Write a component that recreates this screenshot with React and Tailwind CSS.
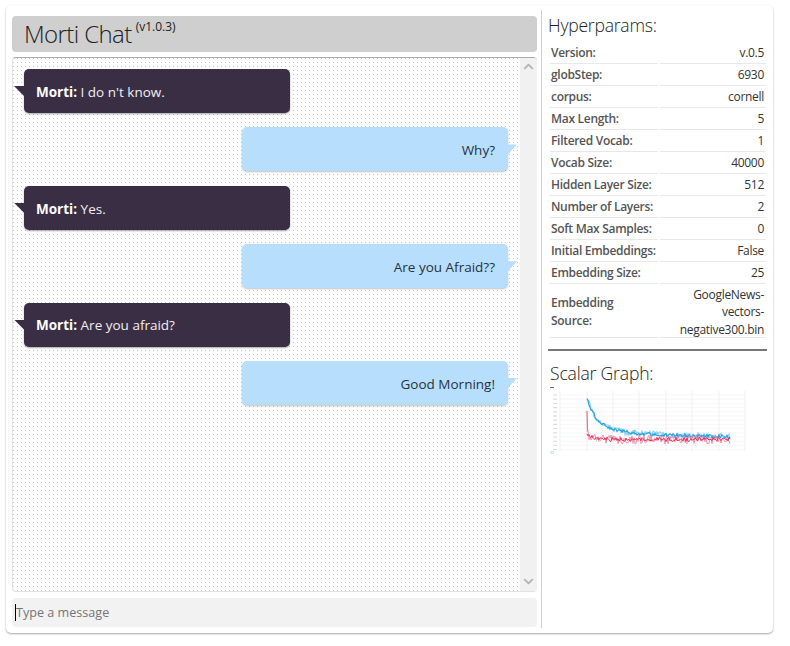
import { ChevronUp, ChevronDown } from "lucide-react";

const messages = [
  { from: "bot", text: "I do n't know." },
  { from: "me", text: "Why?" },
  { from: "bot", text: "Yes." },
  { from: "me", text: "Are you Afraid??" },
  { from: "bot", text: "Are you afraid?" },
  { from: "me", text: "Good Morning!" },
];

const params = [
  ["Version:", "v.0.5"],
  ["globStep:", "6930"],
  ["corpus:", "cornell"],
  ["Max Length:", "5"],
  ["Filtered Vocab:", "1"],
  ["Vocab Size:", "40000"],
  ["Hidden Layer Size:", "512"],
  ["Number of Layers:", "2"],
  ["Soft Max Samples:", "0"],
  ["Initial Embeddings:", "False"],
  ["Embedding Size:", "25"],
];

// noisy training curves for the little scalar chart
function noise(i, seed) {
  const v = Math.sin(i * 12.9898 + seed) * 43758.5453;
  return (v - Math.floor(v)) * 2 - 1;
}

function curve(seed, fn, amp) {
  const pts = [];
  for (let x = 0; x <= 143; x += 1) {
    const y = fn(x) + noise(x * 2, seed) * amp;
    pts.push(`${(587 + x).toFixed(1)},${y.toFixed(1)}`);
  }
  return pts.join(" ");
}

const blueFn = (x) => 438 - 39 * (0.75 * Math.exp(-x / 10) + 0.25 * Math.exp(-x / 50));
const redFn = (x) => 440.5 - 5 * Math.exp(-x / 8);

function ScalarChart() {
  const vLines = [560, 587, 613, 639, 666, 692, 719, 745];
  const hLines = Array.from({ length: 14 }, (_, i) => 396 + i * 4.2);
  return (
    <svg width="200" height="70" viewBox="548 386 200 70" className="blur-[0.6px]">
      <rect x="550" y="388" width="4" height="1" fill="#666" />
      {vLines.map((x) => (
        <line key={x} x1={x} x2={x} y1="392" y2="452" stroke="#e6eaed" strokeWidth="0.7" />
      ))}
      {hLines.map((y) => (
        <g key={y}>
          <line x1="560" x2="745" y1={y} y2={y} stroke="#eef0f2" strokeWidth="0.6" />
          <rect x="553" y={y - 0.5} width="4" height="1" fill="#d5d8da" />
        </g>
      ))}
      <polyline points={curve(3.1, blueFn, 3)} fill="none" stroke="#8fd0f2" strokeWidth="1.2" />
      <polyline points={curve(7.7, blueFn, 1.8)} fill="none" stroke="#1f9fdf" strokeWidth="1.1" />
      <polyline points="587,412 587.5,432" fill="none" stroke="#ee6a88" strokeWidth="1.2" />
      <polyline points={curve(5.3, redFn, 4.5)} fill="none" stroke="#f08aa3" strokeWidth="0.9" />
      <polyline points={curve(9.2, redFn, 2.2)} fill="none" stroke="#e8355f" strokeWidth="1" />
      <rect x="551" y="452.5" width="2.5" height="2" fill="none" stroke="#9cc8e6" strokeWidth="0.5" />
    </svg>
  );
}

function Bubble({ from, text }) {
  if (from === "bot") {
    return (
      <div className="relative flex h-11 w-[266px] items-center rounded-[5px] bg-[#3a2e44] pl-3 pt-[2px] text-[13.5px] text-[#f0eef2] shadow-[0_1px_2px_rgba(0,0,0,0.35)]">
        <span className="absolute left-[-10px] top-[17px] h-[10px] w-[10px] bg-[#3a2e44] [clip-path:polygon(0_0,100%_0,100%_100%)]" />
        <p>
          <b className="font-bold text-white">Morti:</b> {text}
        </p>
      </div>
    );
  }
  return (
    <div className="relative ml-[218px] flex h-11 w-[266px] items-center justify-end rounded-[5px] bg-[#b7dffd] pr-[13px] pt-[2px] text-[13.5px] text-[#27313d] shadow-[0_1px_2px_rgba(0,0,0,0.25)]">
      <span className="absolute right-[-9px] top-[17px] h-[10px] w-[9px] bg-[#b7dffd] [clip-path:polygon(0_0,100%_0,0_100%)]" />
      <p>{text}</p>
    </div>
  );
}

export default function App() {
  return (
    <div className="h-[646px] w-[790px] bg-white pl-[6px] pt-[5px] font-['Open_Sans','Noto_Sans',sans-serif]">
      <div className="flex h-[628px] w-[767px] rounded-[5px] bg-white pb-[5px] pl-[6px] pt-[11px] shadow-[0_1px_2px_rgba(0,0,0,0.35)]">
        {/* chat column */}
        <div className="flex w-[525px] flex-col">
          <div className="flex h-9 items-center rounded-[4px] bg-[#cfcfcf] pl-3 text-[#222]">
            <h1 className="text-[24px] font-light leading-none tracking-[-0.6px]">
              Morti Chat
              <sup className="relative top-[-3px] ml-1 align-super text-[12px] font-normal tracking-normal">(v1.0.3)</sup>
            </h1>
          </div>
          <div className="mt-[5px] flex h-[535px] overflow-hidden rounded-[4px] border-t border-l border-b border-t-[#aaaaaa] border-l-[#e2e2e2] border-b-[#e2e2e2]">
            <div className="flex w-[507px] flex-col gap-[14.4px] bg-[radial-gradient(circle_at_0.5px_0.5px,#c8c8c8_0.5px,transparent_0.5px)] bg-[length:4px_4px] pl-[11px] pt-[11px]">
              {messages.map((m, i) => (
                <Bubble key={i} from={m.from} text={m.text} />
              ))}
            </div>
            <div className="flex w-[17px] flex-col items-center justify-between bg-[#f1f1f1] pb-[2px] pt-px text-[#b4b4b4]">
              <ChevronUp size={15} strokeWidth={3} />
              <ChevronDown size={15} strokeWidth={3} />
            </div>
          </div>
          <div className="mt-[6px] flex h-[29px] items-center rounded-[4px] bg-[#f2f2f2] pl-[3px]">
            <span className="h-[17px] w-px bg-black" />
            <input
              placeholder="Type a message"
              className="mt-[2px] w-full bg-transparent text-[12.6px] outline-none placeholder:text-[#757575]"
            />
          </div>
        </div>

        {/* hyperparams column */}
        <div className="ml-1 mt-[-6px] w-[226px] border-l border-[#cfcfcf] pl-[6px]">
          <h2 className="mt-[3px] text-[17.6px] font-light leading-6 tracking-[-0.25px] text-[#222]">Hyperparams:</h2>
          <div className="mt-[5px] grid w-[216px] grid-cols-[108px_106px] gap-x-[2px] pl-[2px] text-xs tracking-[-0.3px] text-[#333]">
            {params.map(([label, value]) => (
              <div key={label} className="contents">
                <div className="flex h-[22px] items-center whitespace-nowrap border-b border-[#e8e8e8] pl-px font-semibold text-[#555]">
                  {label}
                </div>
                <div className="flex h-[22px] items-center justify-end border-b border-[#e8e8e8] pr-[2px]">{value}</div>
              </div>
            ))}
            <div className="flex h-[54px] items-center border-b border-[#e8e8e8] pl-px pt-[3px] font-semibold leading-[18px] text-[#555]">
              Embedding
              <br />
              Source:
            </div>
            <div className="flex h-[54px] items-center justify-end border-b border-[#e8e8e8] pr-[2px] pt-[3px] text-right leading-[17.5px]">
              GoogleNews-
              <br />
              vectors-
              <br />
              negative300.bin
            </div>
          </div>
          <div className="mt-[11px] h-[2px] w-[219px] bg-[#777]" />
          <h2 className="ml-[2px] mt-[10px] text-[17.6px] font-light leading-6 tracking-[-0.2px] text-[#222]">Scalar Graph:</h2>
          <ScalarChart />
        </div>
      </div>
    </div>
  );
}
